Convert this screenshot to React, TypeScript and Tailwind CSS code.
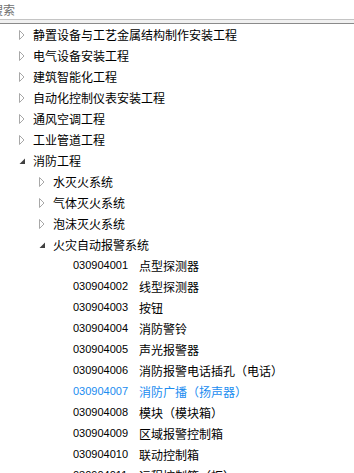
import React from 'react';

type Node = {
  label: string;
  level: number;
  expanded?: boolean;
};

type Leaf = {
  code: string;
  label: string;
  selected?: boolean;
};

const groups: Node[] = [
  { label: '静置设备与工艺金属结构制作安装工程', level: 1 },
  { label: '电气设备安装工程', level: 1 },
  { label: '建筑智能化工程', level: 1 },
  { label: '自动化控制仪表安装工程', level: 1 },
  { label: '通风空调工程', level: 1 },
  { label: '工业管道工程', level: 1 },
  { label: '消防工程', level: 1, expanded: true },
  { label: '水灭火系统', level: 2 },
  { label: '气体灭火系统', level: 2 },
  { label: '泡沫灭火系统', level: 2 },
  { label: '火灾自动报警系统', level: 2, expanded: true },
];

const leaves: Leaf[] = [
  { code: '030904001', label: '点型探测器' },
  { code: '030904002', label: '线型探测器' },
  { code: '030904003', label: '按钮' },
  { code: '030904004', label: '消防警铃' },
  { code: '030904005', label: '声光报警器' },
  { code: '030904006', label: '消防报警电话插孔（电话）' },
  { code: '030904007', label: '消防广播（扬声器）', selected: true },
  { code: '030904008', label: '模块（模块箱）' },
  { code: '030904009', label: '区域报警控制箱' },
  { code: '030904010', label: '联动控制箱' },
  { code: '030904011', label: '远程控制箱（柜）' },
];

const cjk = "font-['Noto_Sans_CJK_SC',sans-serif]";

function Arrow({ expanded }: { expanded?: boolean }) {
  if (expanded) {
    return (
      <svg width="7" height="7" viewBox="0 0 7 7" className="ml-[0px] mt-[2px]">
        <polygon points="6,0.5 6,6 0.5,6" fill="#404040" />
      </svg>
    );
  }
  return (
    <svg width="6" height="10" viewBox="0 0 6 10">
      <polygon points="0.5,0.5 5,5 0.5,9.5" fill="#fff" stroke="#a8a8a8" strokeWidth="1" />
    </svg>
  );
}

export default function App() {
  return (
    <div className={`w-[354px] h-[473px] overflow-hidden bg-white ${cjk}`}>
      {/* Search */}
      <div className="h-[20px] border-b border-[#c4c4c4] flex items-center overflow-hidden">
        <span className="ml-[-9px] text-[12px] leading-none text-[#707070] whitespace-nowrap">搜索</span>
      </div>
      <div className="h-[3px] bg-[#f0f0f0]" />
      <div className="h-px bg-[#8a8a8a]" />

      {/* Tree */}
      <div className="text-[12px] text-black">
        {groups.map(g => (
          <div
            key={g.label}
            className={`h-[21px] flex items-center whitespace-nowrap ${g.level === 1 ? 'pl-[19px]' : 'pl-[39px]'}`}
          >
            <span className="w-[14px] flex items-center">
              <Arrow expanded={g.expanded} />
            </span>
            <span className="leading-none">{g.label}</span>
          </div>
        ))}
        {leaves.map(l => (
          <div
            key={l.code}
            className={`h-[21px] flex items-center pl-[73px] whitespace-nowrap ${l.selected ? 'text-[#1a8cf0]' : 'text-black'}`}
          >
            <span className="w-[66px] font-['Liberation_Sans',sans-serif] text-[11px] leading-none">{l.code}</span>
            <span className="leading-none">{l.label}</span>
          </div>
        ))}
      </div>
    </div>
  );
}
